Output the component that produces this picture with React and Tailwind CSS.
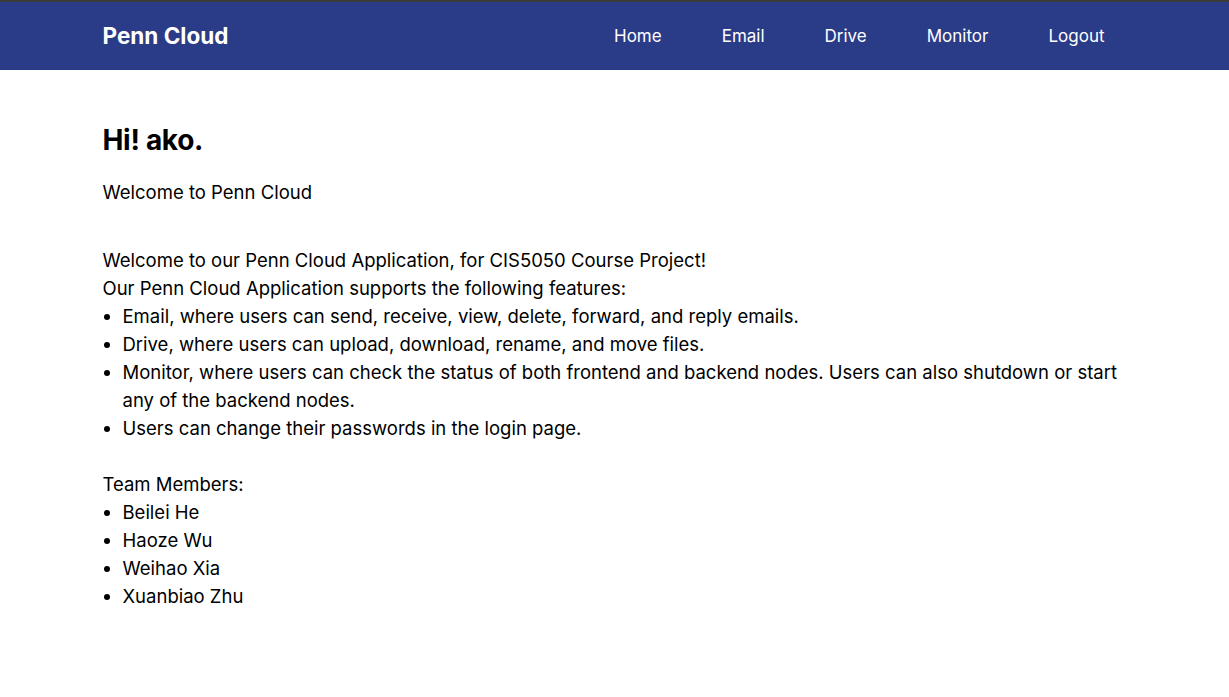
const navLinks = ['Home', 'Email', 'Drive', 'Monitor', 'Logout'];

const features = [
    'Email, where users can send, receive, view, delete, forward, and reply emails.',
    'Drive, where users can upload, download, rename, and move files.',
    'Monitor, where users can check the status of both frontend and backend nodes. Users can also shutdown or start any of the backend nodes.',
    'Users can change their passwords in the login page.',
];

const members = ['Beilei He', 'Haoze Wu', 'Weihao Xia', 'Xuanbiao Zhu'];

function BulletList({ items }) {
    return (
        <ul className="list-disc pl-5">
            {items.map((item) => (
                <li key={item}>{item}</li>
            ))}
        </ul>
    );
}

export default function App() {
    return (
        <div className="min-h-screen bg-white text-black font-['Inter',sans-serif]">
            <header className="bg-[#2a3b87] border-t-2 border-[#3a3a3a] h-[70px]">
                <div className="max-w-[1024px] mx-auto h-full flex items-center justify-between">
                    <span className="text-[22.5px] font-bold text-white">Penn Cloud</span>
                    <nav className="flex items-center gap-[60px] pr-[22px] pt-[2px]">
                        {navLinks.map((link) => (
                            <a key={link} href="#" className="text-[17px] text-white">{link}</a>
                        ))}
                    </nav>
                </div>
            </header>

            <main className="max-w-[1024px] mx-auto pt-[52px] text-[18.5px] leading-[28px]">
                <h1 className="text-[28px] font-bold leading-[36px] tracking-[-0.3px]">Hi! ako.</h1>
                <p className="mt-[20px]">Welcome to Penn Cloud</p>

                <div className="mt-[40px]">
                    <p>Welcome to our Penn Cloud Application, for CIS5050 Course Project!</p>
                    <p>Our Penn Cloud Application supports the following features:</p>
                    <BulletList items={features} />
                    <br />
                    <p>Team Members:</p>
                    <BulletList items={members} />
                </div>
            </main>
        </div>
    );
}
